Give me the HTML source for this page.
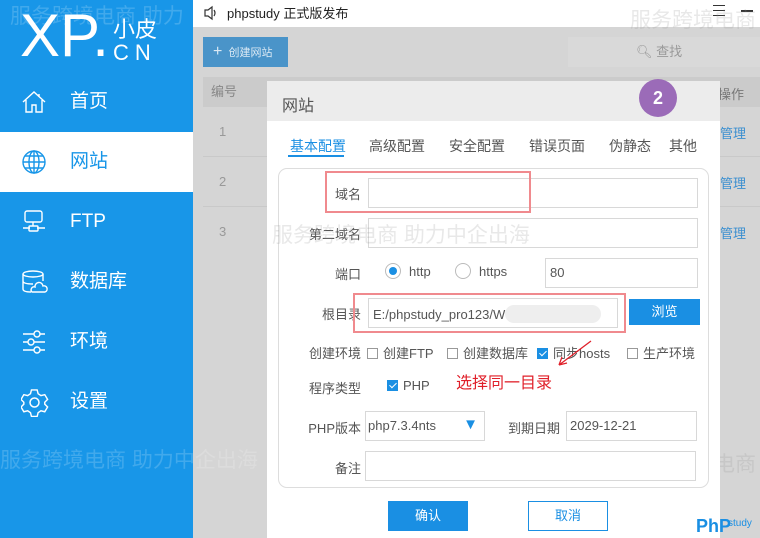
<!DOCTYPE html>
<html><head><meta charset="utf-8"><style>
*{margin:0;padding:0;box-sizing:border-box}
body{width:760px;height:538px;overflow:hidden;position:relative;background:#d5d5d5;font-family:"Liberation Sans","Noto Sans CJK SC",sans-serif;font-size:13px;color:#555}
.abs{position:absolute}
#side{left:0;top:0;width:193px;height:538px;background:#1896e8;color:#fff}
.nav{position:absolute;left:0;width:193px;height:60px;font-size:19px}
.nav span{position:absolute;left:70px;top:16px;line-height:28px;height:28px}
.nav svg{position:absolute;left:21px;top:17px}
#top{left:193px;top:0;width:567px;height:27px;background:#fff}
.wm{position:absolute;color:rgba(150,150,150,.22);font-size:21px;white-space:nowrap}
.inp{position:absolute;border:1px solid #d8d8d8;background:#fff;height:30px}
.lbl{position:absolute;font-size:13px;color:#555;text-align:right;width:60px}
.cb{display:inline-block;width:11px;height:11px;border:1px solid #999;vertical-align:-1px;margin-right:5px;background:#fff}
.cbc{background:#1a8fe3;border-color:#1a8fe3;position:relative}
.cbc:after{content:"";position:absolute;left:3px;top:0px;width:3px;height:6px;border:solid #fff;border-width:0 1.5px 1.5px 0;transform:rotate(45deg)}
</style></head><body>
<div id="top" class="abs">
<svg class="abs" style="left:10px;top:5px" width="16" height="16" viewBox="0 0 16 16"><path d="M2 5h3l4-3v12l-4-3H2z M11 5q2 3 0 6" fill="none" stroke="#333" stroke-width="1.2"/></svg>
<div class="abs" style="left:34px;top:3px;font-size:13px;color:#222">phpstudy 正式版发布</div>
<div class="abs" style="left:520px;top:5px;width:12px;height:1px;background:#333;box-shadow:0 5px 0 #333,0 10px 0 #333"></div>
<div class="abs" style="left:548px;top:10px;width:12px;height:2px;background:#333"></div>
</div>
<div class="wm" style="left:630px;top:4px">服务跨境电商</div>
<div class="abs" style="left:203px;top:37px;width:85px;height:30px;background:#4a94c9;color:#dbe9f4;font-size:11px;line-height:30px;padding-left:10px"><span style="font-size:16px">+</span>&nbsp; 创建网站</div>
<div class="abs" style="left:568px;top:37px;width:192px;height:30px;background:#d9d9d9;color:#999;line-height:30px;padding-left:68px">🔍︎ 查找</div>
<div class="abs" style="left:203px;top:77px;width:557px;height:30px;background:#cbcbcb;color:#888;line-height:30px;padding-left:8px">编号</div>
<div class="abs" style="left:718px;top:84px;color:#777">操作</div>
<div class="abs" style="left:219px;top:124px;color:#999">1</div>
<div class="abs" style="left:219px;top:174px;color:#999">2</div>
<div class="abs" style="left:219px;top:224px;color:#999">3</div>
<div class="abs" style="left:720px;top:123px;color:#3b8fd0">管理</div>
<div class="abs" style="left:720px;top:173px;color:#3b8fd0">管理</div>
<div class="abs" style="left:720px;top:223px;color:#3b8fd0">管理</div>
<div class="abs" style="left:203px;top:156px;width:557px;height:1px;background:#c9c9c9;box-shadow:0 50px 0 #c9c9c9"></div>
<div class="wm" style="left:630px;top:448px">服务跨境电商</div>
<div id="side" class="abs">
<div class="abs" style="left:20px;top:3px;font-size:60px;line-height:66px">XP.</div>
<div class="abs" style="left:113px;top:12px;font-size:22px">小皮</div>
<div class="abs" style="left:113px;top:40px;font-size:22px;letter-spacing:6px">CN</div>
<div class="nav" style="top:72px"><svg width="26" height="26" viewBox="0 0 26 26" fill="none" stroke="#fff" stroke-width="1.4"><path d="M2 13L13 3l11 10M5 11v12h6v-7h4v7h6V11M18 5v3"/></svg><span>首页</span></div>
<div class="nav" style="top:132px;background:#fff;color:#1896e8"><svg width="26" height="26" viewBox="0 0 26 26" fill="none" stroke="#1896e8" stroke-width="1.4"><circle cx="13" cy="13" r="11"/><ellipse cx="13" cy="13" rx="5" ry="11"/><path d="M2 13h22M4 7h18M4 19h18M13 2v22"/></svg><span>网站</span></div>
<div class="nav" style="top:192px"><svg width="26" height="26" viewBox="0 0 26 26" fill="none" stroke="#fff" stroke-width="1.4"><rect x="4" y="2" width="17" height="11" rx="2"/><path d="M12 13v4M2 19h7M16 19h8"/><rect x="8" y="17" width="9" height="5" rx="1"/></svg><span>FTP</span></div>
<div class="nav" style="top:252px"><svg width="28" height="26" viewBox="0 0 28 26" fill="none" stroke="#fff" stroke-width="1.4"><ellipse cx="12" cy="5" rx="10" ry="3"/><path d="M2 5v15q0 3 8 3M22 5v7M2 12q0 3 10 3"/><path d="M11 23h13a3 3 0 0 0-2-6 4 4 0 0 0-8 1 3 3 0 0 0-3 5z"/></svg><span>数据库</span></div>
<div class="nav" style="top:312px"><svg width="26" height="26" viewBox="0 0 26 26" fill="none" stroke="#fff" stroke-width="1.4"><path d="M2 5h11M19 5h5M2 13h5M13 13h11M2 21h11M19 21h5"/><circle cx="16" cy="5" r="3"/><circle cx="10" cy="13" r="3"/><circle cx="16" cy="21" r="3"/></svg><span>环境</span></div>
<div class="nav" style="top:372px"><svg width="28" height="28" viewBox="0 0 28 28" fill="none" stroke="#fff" stroke-width="1.5"><path d="M11 2h6l1 4 3 2 4-1 3 5-3 3v2l3 3-3 5-4-1-3 2-1 4h-6l-1-4-3-2-4 1-3-5 3-3v-2l-3-3 3-5 4 1 3-2z" transform="translate(0 -1) scale(.95)"/><circle cx="13.5" cy="13.5" r="4.5"/></svg><span>设置</span></div>
<div class="wm" style="left:10px;top:0px;color:rgba(255,255,255,.18)">服务跨境电商 助力</div>
<div class="wm" style="left:0px;top:444px;color:rgba(255,255,255,.18)">服务跨境电商 助力中企出海</div>
</div>
<div class="abs" style="left:267px;top:81px;width:453px;height:457px;background:#fff">
<div class="abs" style="left:0;top:0;width:453px;height:40px;background:#ececec"></div>
<div class="abs" style="left:15px;top:11px;font-size:16px;color:#555">网站</div>
<div class="abs" style="left:372px;top:-2px;width:38px;height:38px;border-radius:50%;background:#9b6bb8;color:#fff;font-weight:bold;font-size:18px;text-align:center;line-height:38px">2</div>
<div class="abs" style="left:23px;top:55px;font-size:14px;color:#1a8fe3">基本配置</div>
<div class="abs" style="left:21px;top:74px;width:56px;height:2px;background:#1a8fe3"></div>
<div class="abs" style="left:102px;top:55px;font-size:14px;color:#555">高级配置</div>
<div class="abs" style="left:182px;top:55px;font-size:14px;color:#555">安全配置</div>
<div class="abs" style="left:262px;top:55px;font-size:14px;color:#555">错误页面</div>
<div class="abs" style="left:342px;top:55px;font-size:14px;color:#555">伪静态</div>
<div class="abs" style="left:402px;top:55px;font-size:14px;color:#555">其他</div>
<div class="abs" style="left:11px;top:87px;width:431px;height:320px;border:1px solid #ddd;border-radius:9px"></div>
<div class="lbl" style="left:34px;top:103px">域名</div>
<div class="inp" style="left:101px;top:97px;width:330px"></div>
<div class="abs" style="left:58px;top:90px;width:206px;height:42px;border:2px solid #f08a8e"></div>
<div class="lbl" style="left:34px;top:143px">第二域名</div>
<div class="inp" style="left:101px;top:137px;width:330px"></div>
<div class="lbl" style="left:34px;top:183px">端口</div>
<div class="abs" style="left:118px;top:182px;width:16px;height:16px;border:1px solid #bbb;border-radius:50%"><div style="margin:3px;width:8px;height:8px;border-radius:50%;background:#1a8fe3"></div></div>
<div class="abs" style="left:142px;top:183px">http</div>
<div class="abs" style="left:188px;top:182px;width:16px;height:16px;border:1px solid #bbb;border-radius:50%"></div>
<div class="abs" style="left:212px;top:183px">https</div>
<div class="inp" style="left:278px;top:177px;width:153px;padding:6px 4px">80</div>
<div class="lbl" style="left:34px;top:223px">根目录</div>
<div class="inp" style="left:101px;top:217px;width:250px;padding:6px 4px;color:#555">E:/phpstudy_pro123/W<span style="display:inline-block;width:96px;height:18px;vertical-align:-4px;background:#eee;border-radius:9px"></span></div>
<div class="abs" style="left:86px;top:212px;width:273px;height:40px;border:2px solid #f08a8e"></div>
<div class="abs" style="left:362px;top:218px;width:71px;height:26px;background:#1a8fe3;color:#fff;text-align:center;line-height:26px">浏览</div>
<div class="lbl" style="left:34px;top:262px">创建环境</div>
<div class="abs" style="left:100px;top:262px;white-space:nowrap"><span class="cb"></span>创建FTP</div>
<div class="abs" style="left:180px;top:262px;white-space:nowrap"><span class="cb"></span>创建数据库</div>
<div class="abs" style="left:270px;top:262px;white-space:nowrap"><span class="cb cbc"></span>同步hosts</div>
<div class="abs" style="left:360px;top:262px;white-space:nowrap"><span class="cb"></span>生产环境</div>
<div class="lbl" style="left:34px;top:297px">程序类型</div>
<div class="abs" style="left:120px;top:297px;white-space:nowrap"><span class="cb cbc"></span>PHP</div>
<div class="abs" style="left:189px;top:288px;font-size:16px;color:#e0202a">选择同一目录</div>
<svg class="abs" style="left:288px;top:258px" width="40" height="30"><path d="M36 2L4 26M4 26l3-8M4 26l8-2" stroke="#e0202a" stroke-width="1.3" fill="none"/></svg>
<div class="lbl" style="left:34px;top:337px">PHP版本</div>
<div class="inp" style="left:98px;top:330px;width:120px;padding:6px 2px">php7.3.4nts<span style="position:absolute;right:6px;top:4px;color:#1a8fe3;font-size:15px">▼</span></div>
<div class="abs" style="left:241px;top:337px">到期日期</div>
<div class="inp" style="left:299px;top:330px;width:131px;padding:6px 3px">2029-12-21</div>
<div class="lbl" style="left:34px;top:377px">备注</div>
<div class="inp" style="left:98px;top:370px;width:331px"></div>
<div class="abs" style="left:121px;top:420px;width:80px;height:30px;background:#1a8fe3;color:#fff;text-align:center;line-height:30px">确认</div>
<div class="abs" style="left:261px;top:420px;width:80px;height:30px;border:1px solid #1a8fe3;color:#1a8fe3;text-align:center;line-height:28px">取消</div>
<div class="wm" style="left:5px;top:138px">服务跨境电商 助力中企出海</div>
</div>
<div class="abs" style="left:696px;top:516px;color:#1a8fe3;font-size:18px;font-weight:bold">PhP</div>
<div class="abs" style="left:728px;top:518px;color:#1a8fe3;font-size:10px">study</div>
</body></html>
